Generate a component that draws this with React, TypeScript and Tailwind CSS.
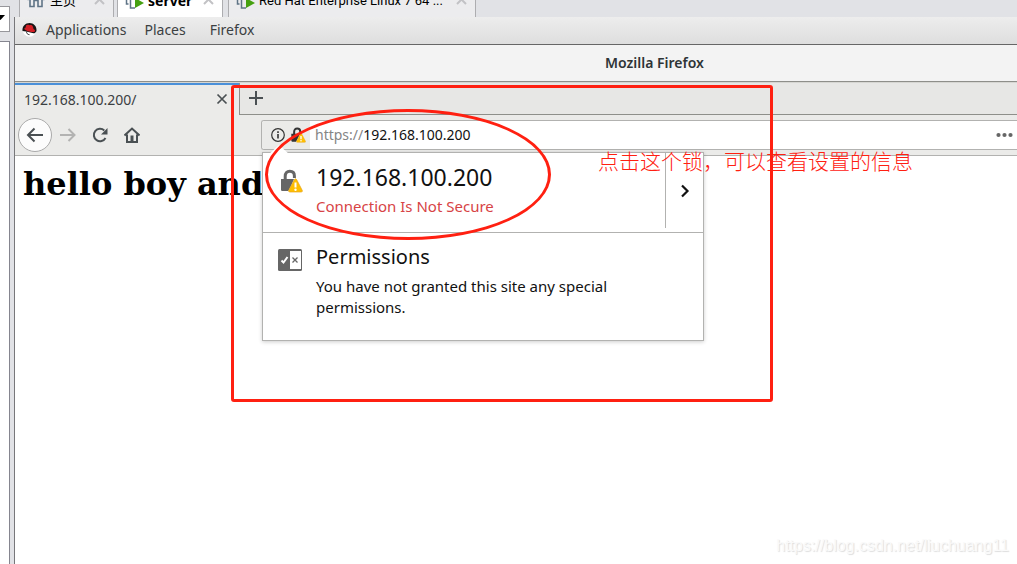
import type { ReactNode } from "react";

type VmTabProps = {
  label: string;
  icon: ReactNode;
  active?: boolean;
  className?: string;
};

function HomeTabIcon() {
  return (
    <svg width="20" height="18" viewBox="0 0 20 18" fill="none" stroke="#5f7486" strokeWidth="1.6">
      <path d="M1.5 9 10 1.500 18.500 9M4 7v8.500h4v-6h4v6h4V7" />
    </svg>
  );
}

function MachineIcon() {
  return (
    <svg width="20" height="18" viewBox="0 0 20 18" fill="none">
      <path d="M2.500 2v11h2M12 4h-5.500v13H11" stroke="#5f7486" strokeWidth="1.500" />
      <path d="M11 7v10l9-5z" fill="#45a010" />
    </svg>
  );
}

function VmTab({ label, icon, active = false, className = "" }: VmTabProps) {
  return (
    <div
      className={[
        "flex h-[26px] shrink-0 items-start border-x border-[#adadb0] pl-[6px] pr-2 leading-[20px]",
        active ? "bg-white font-['Noto_Sans',sans-serif] text-[14px] font-bold" : "bg-[#ececee] text-[13px]",
        className,
      ].join(" ")}
    >
      {icon}
      <button type="button" className="ml-1 flex-1 text-left whitespace-nowrap text-black">
        {label}
      </button>
      <button type="button" aria-label={`Close ${label}`} className="pt-[3px]">
        <svg width="11" height="11" viewBox="0 0 11 11" stroke="#c2c2c5" strokeWidth="2">
          <path d="m1 1 9 9M10 1 1 10" />
        </svg>
      </button>
    </div>
  );
}

function RedHatIcon() {
  return (
    <svg width="15" height="14" viewBox="0 0 15 14">
      <circle cx="7.500" cy="7" r="6.700" fill="#fff" />
      <path d="M.5 8C0 3 3.500 0 7.500 0S15 3 14.500 8c-1 2-2 2.500-3 2.300L4 8.500z" fill="#191414" />
      <path d="M4 2.500c1-1 2-.8 3.500-.3C9 1.700 10.500 2 11 4l.5 2c1.800.8 2.200 2 1 2.700C10 9.800 4 8 2.500 6.200 2 5.200 2.700 4.700 3.600 4.700z" fill="#d31f25" />
      <path d="M4.500 8.500c0 2 1 3 3 3.200" stroke="#333" fill="none" />
    </svg>
  );
}

// Padlock with an open shackle and a warning sign over its corner
function InsecureLock({ size, color }: { size: number; color: string }) {
  return (
    <svg width={size} height={size} viewBox="0 0 24 24" fill="none">
      <path d="M6.200 11V7.500C6.200 4 8 2.300 10.800 2.300S15.400 4 15.400 7v2" stroke={color} strokeWidth="3" />
      <path d="M2 10h13l-5 12H3.200Q2 22 2 20.800z" fill={color} />
      <path d="M16.500 9.500 9 22.500h14.500z" fill="#fff" />
      <path d="M15.400 10.500q1.100-1.700 2.200 0l5.600 10.800q.7 1.700-1.100 1.700H10.900q-1.800 0-1.100-1.700z" fill="#ffbf00" stroke="#e7a51c" strokeWidth=".7" />
      <path d="M16.500 13.500v5" stroke="#fff" strokeWidth="2" />
      <circle cx="16.500" cy="20.700" r="1.200" fill="#fff" />
    </svg>
  );
}

function PermissionsIcon() {
  return (
    <svg width="24" height="22" viewBox="0 0 24 22" fill="none" className="mt-[5px] shrink-0">
      <rect width="24" height="22" rx="1.500" fill="#666" />
      <path d="M12 2h11v18H12z" fill="#fff" />
      <path d="m3.500 11.500 2 2L9.500 8" stroke="#fff" strokeWidth="2" />
      <path d="m14.500 8.500 5 5m0-5-5 5" stroke="#666" strokeWidth="1.300" />
    </svg>
  );
}

function SiteInfoPopup() {
  return (
    <div className="absolute top-[31px] left-0 z-10 w-[442px] border border-[#b2b2b0] bg-white shadow-[0_1px_4px_rgba(0,0,0,0.2)]">
      <svg width="20" height="11" viewBox="0 0 20 11" className="absolute -top-[9px] left-[6px]">
        <path d="M0 10 10 1l10 9z" fill="#fff" />
      </svg>
      <section className="flex h-[80px] border-b border-[#b2b2b0]">
        <div className="flex flex-1 gap-[13px] pt-[11px] pl-4">
          <div className="pt-[5px]">
            <InsecureLock size={24} color="#666" />
          </div>
          <div>
            <h2 className="text-[23px] leading-[26px] text-[#111]">192.168.100.200</h2>
            <p className="mt-[6px] text-[15px] leading-[21px] text-[#d74345]">Connection Is Not Secure</p>
          </div>
        </div>
        <button
          type="button"
          aria-label="Show connection details"
          className="mb-1 flex w-[38px] items-center justify-center border-l border-[#b2b2b0]"
        >
          <svg width="12" height="14" viewBox="0 0 12 14" fill="none" stroke="#111" strokeWidth="2.200">
            <path d="m3 1.500 5.500 5.500L3 12.500" />
          </svg>
        </button>
      </section>
      <section className="flex gap-[14px] pt-[11px] pb-[22px] pl-[15px]">
        <PermissionsIcon />
        <div className="max-w-[330px]">
          <h2 className="text-[20px] leading-[26px] text-[#111]">Permissions</h2>
          <p className="mt-[6px] text-[15px] leading-[21px] text-[#111]">
            You have not granted this site any special permissions.
          </p>
        </div>
      </section>
    </div>
  );
}

function UrlBar() {
  return (
    <div className="relative ml-[121px] flex h-[30px] flex-1 rounded-l-[3px] border border-r-0 border-[#b2b2b0] bg-white">
      <button
        type="button"
        aria-label="Site information"
        className="flex w-[48px] items-center gap-[5px] rounded-l-[2px] bg-[#ebebe9] pl-[9px]"
      >
        <svg width="14" height="14" viewBox="0 0 14 14" fill="none" stroke="#333">
          <circle cx="7" cy="7" r="6.300" strokeWidth="1.200" />
          <path d="M7 6v4.500M7 3.200v1.700" strokeWidth="1.600" />
        </svg>
        <InsecureLock size={16} color="#333" />
      </button>
      <a href="https://192.168.100.200" className="flex-1 pl-[5px] text-[14px] leading-[28px] text-[#111]">
        <span className="text-[#858585]">https://</span>192.168.100.200
      </a>
      <button type="button" aria-label="Page actions" className="pr-1">
        <svg width="17" height="6" viewBox="0 0 17 6" fill="#666">
          <circle cx="2.500" cy="3" r="2.100" />
          <circle cx="8.500" cy="3" r="2.100" />
          <circle cx="14.500" cy="3" r="2.100" />
        </svg>
      </button>
      <SiteInfoPopup />
    </div>
  );
}

function NavBar() {
  return (
    <div className="flex h-[41px] items-center border-b border-[#b2b2b0] bg-[#ebebe9] pl-[3px]">
      <button
        type="button"
        aria-label="Back"
        className="flex size-[34px] items-center justify-center rounded-full border border-[#aaa] bg-[#fcfcfc]"
      >
        <svg width="18" height="16" viewBox="0 0 18 16" fill="none" stroke="#4a5053" strokeWidth="2">
          <path d="M17 8H2M8.500 1.500 2 8l6.500 6.500" />
        </svg>
      </button>
      <button type="button" aria-label="Forward" className="ml-2">
        <svg width="16" height="14" viewBox="0 0 16 14" fill="none" stroke="#b3b3b2" strokeWidth="2">
          <path d="M0 7h14.500M8.500 1l6 6-6 6" />
        </svg>
      </button>
      <button type="button" aria-label="Reload" className="ml-4">
        <svg width="16" height="16" viewBox="0 0 16 16" fill="none" stroke="#4a5053" strokeWidth="2">
          <path d="M13.500 11A6.200 6.200 0 1 1 12.300 3.500" />
          <path d="M15.500 1v6.500H9z" fill="#4a5053" stroke="none" />
        </svg>
      </button>
      <button type="button" aria-label="Home" className="ml-4">
        <svg width="16" height="16" viewBox="0 0 16 16" fill="none" stroke="#4a5053" strokeWidth="2">
          <path d="M.5 8.500 8 1.500l7.500 7M3 7.500V15h10V7.500" />
          <path d="M6.500 8.500h3V15h-3z" fill="#4a5053" stroke="none" />
        </svg>
      </button>
      <UrlBar />
    </div>
  );
}

function Annotations() {
  return (
    <>
      <div className="pointer-events-none absolute top-[85px] left-[231px] z-20 h-[317px] w-[542px] rounded-[3px] border-3 border-[#ff2011]" />
      <div className="pointer-events-none absolute top-[109px] left-[265px] z-20 h-[131px] w-[286px] rounded-[50%] border-3 border-[#ff2011]" />
      <p className="absolute top-[146px] left-[598px] z-20 font-['Noto_Sans_CJK_SC',sans-serif] text-[21px] leading-[28px] font-light whitespace-nowrap text-[#ff2011]">
        点击这个锁，可以查看设置的信息
      </p>
      <p className="absolute right-[8px] bottom-[8px] font-['Liberation_Sans',sans-serif] text-[16px] leading-5 text-[#fafafa] [text-shadow:1px_1px_1px_#ddd]">
        https://blog.csdn.net/liuchuang11
      </p>
    </>
  );
}

export default function App() {
  return (
    <div className="relative flex min-h-screen overflow-hidden bg-white font-['Noto_Sans','Noto_Sans_CJK_SC',sans-serif]">
      {/* Library pane edge */}
      <aside className="flex w-[14px] shrink-0 flex-col bg-[#e1e2e6] pt-[6px] pr-1">
        <div className="flex h-[26px] items-center justify-end border border-l-0 border-[#97979c] bg-white pr-1">
          <svg width="9" height="5" viewBox="0 0 9 5" className="mb-1 shrink-0">
            <path d="M0 0h9L4.500 5z" />
          </svg>
        </div>
        <div className="mt-[9px] flex-1 border-t border-r border-[#85858f] bg-white" />
      </aside>

      <div className="flex min-w-0 flex-1 flex-col">
        <div className="flex h-[17px] items-end overflow-hidden bg-[#e1e2e6] pl-[5px] font-['Roboto','Noto_Sans_CJK_SC',sans-serif]">
          <VmTab label="主页" icon={<HomeTabIcon />} className="w-[95px]" />
          <VmTab label="server" icon={<MachineIcon />} active className="ml-[3px] w-[106px]" />
          <VmTab label="Red Hat Enterprise Linux 7 64 ..." icon={<MachineIcon />} className="ml-[5px] w-[248px]" />
        </div>

        <main className="flex flex-1 flex-col border-l border-[#77777a]">
          <nav className="flex h-[28px] items-center border-b border-[#666] bg-linear-to-b from-[#ededed] to-[#dedede] pb-[2px] pl-[7px] text-[14px] leading-5 text-[#3b4042]">
            <RedHatIcon />
            <button type="button" className="ml-[9px]">Applications</button>
            <button type="button" className="ml-[18px]">Places</button>
            <button type="button" className="ml-6">Firefox</button>
          </nav>
          <header className="flex h-[37px] items-center justify-center border-b border-[#8e8f8a] bg-[#f3f3f3] pb-[2px] pl-[277px] text-[14px] font-semibold text-[#2e3436]">
            <h1>Mozilla Firefox</h1>
          </header>

          {/* Browser tabs */}
          <div className="flex h-[33px] bg-[#d6d6d2] pt-px">
            <div className="flex w-[224px] items-center justify-between border-t-2 border-[#4a90d9] bg-[#ebebe9] pr-[11px] pb-[2px] pl-[9px] text-[14px] text-[#3b4042]">
              <span>192.168.100.200/</span>
              <button type="button" aria-label="Close tab">
                <svg width="12" height="12" viewBox="0 0 12 12" stroke="#4a5053" strokeWidth="1.700">
                  <path d="m1.500 1.500 9 9m0-9-9 9" />
                </svg>
              </button>
            </div>
            <div className="flex flex-1 items-center border-b border-l border-[#8e8f8a] bg-[#e7e7e5] pb-px pl-[9px]">
              <button type="button" aria-label="New tab">
                <svg width="14" height="14" viewBox="0 0 14 14" stroke="#4a5053" strokeWidth="2">
                  <path d="M7 0v14M0 7h14" />
                </svg>
              </button>
            </div>
          </div>
          <NavBar />

          <article className="px-2 pt-2">
            <h1 className="font-['DejaVu_Serif',serif] text-[32px] leading-10 font-bold text-black">hello boy and</h1>
          </article>
        </main>
      </div>
      <Annotations />
    </div>
  );
}
